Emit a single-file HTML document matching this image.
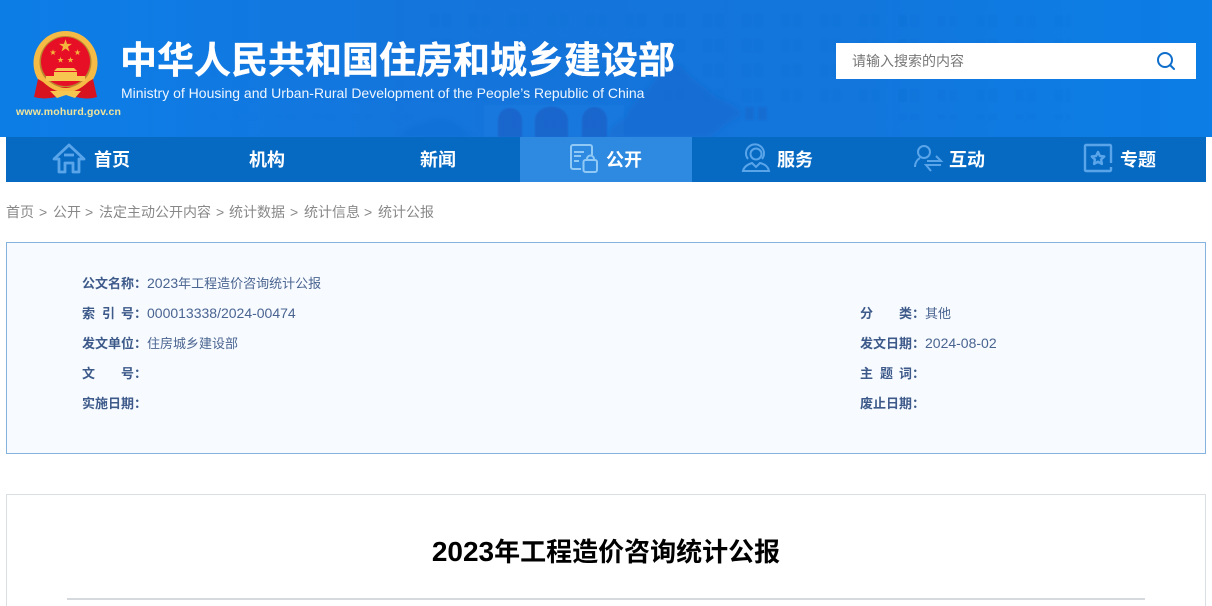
<!DOCTYPE html>
<html lang="zh-CN"><head><meta charset="utf-8"><title>2023年工程造价咨询统计公报</title>
<style>
html,body{margin:0;padding:0;width:1212px;height:606px;overflow:hidden;background:#fff}
body{position:relative;font-family:"Liberation Sans","Noto Sans CJK SC",sans-serif}
.a{position:absolute;white-space:nowrap}
.nav{font-size:18px;font-weight:700;color:#fff;top:148px;line-height:24px}
.l{font-size:13px;font-weight:700;color:#3d5a8a;line-height:20px;white-space:pre}
.v{font-size:13px;color:#4a6491;line-height:20px}
.v span{font-size:14px}
.crumb{font-size:14px;color:#888;line-height:20px;top:202px}
</style></head><body>
<svg class="a" style="left:0;top:0" width="1212" height="137" viewBox="0 0 1212 137">
<defs>
<linearGradient id="bg" x1="0" x2="1" y1="0" y2="0"><stop offset="0" stop-color="#0d7de6"/><stop offset=".45" stop-color="#1278e0"/><stop offset="1" stop-color="#0c7de4"/></linearGradient>
<linearGradient id="fade" x1="0" x2="1" y1="0" y2="0"><stop offset="0" stop-color="#1a6ccf" stop-opacity="0"/><stop offset=".3" stop-color="#1a6ccf" stop-opacity=".3"/><stop offset=".75" stop-color="#1a6ccf" stop-opacity=".3"/><stop offset="1" stop-color="#1a6ccf" stop-opacity="0"/></linearGradient>
<pattern id="win" x="428" y="12" width="39" height="25" patternUnits="userSpaceOnUse"><rect x="2" y="2" width="9" height="13" fill="#1b5fc4"/><rect x="14" y="2" width="9" height="13" fill="#1b5fc4"/></pattern>
<filter id="b1"><feGaussianBlur stdDeviation=".8"/></filter><filter id="b2"><feGaussianBlur stdDeviation="2.500"/></filter>
</defs>
<rect width="1212" height="137" fill="url(#bg)"/>
<rect x="130" y="0" width="950" height="137" fill="url(#fade)"/>
<g filter="url(#b1)">
<rect x="428" y="12" width="480" height="100" fill="url(#win)" opacity=".09"/>
<rect x="880" y="15" width="190" height="105" fill="url(#win)" opacity=".07"/>
<rect x="210" y="50" width="220" height="70" fill="url(#win)" opacity=".04"/>
<rect x="745" y="107" width="9" height="13" fill="#1b5fc4" opacity=".4"/><rect x="758" y="107" width="9" height="13" fill="#1b5fc4" opacity=".4"/>
<rect x="484" y="105" width="140" height="32" fill="#3a8ce6" opacity=".12"/>
<path d="M498 137v-17a12 12 0 0 1 24 0v17z M535 137v-17a16 13 0 0 1 33 0v17z M582 137v-17a12.500 13 0 0 1 25 0v17z" fill="#1c5ec6" opacity=".7"/>
</g>
<g filter="url(#b2)" fill="#1a63c8">
<path d="M608 137c2-10 12-16 18-20 3-12 14-20 22-28 7-12 20-22 28-25 10 4 14 14 22 18 8 6 14 12 20 16 10 4 20 8 24 16-6 6-14 8-20 14-4 4-8 6-12 9z" opacity=".38"/>
<path d="M400 137c6-8 14-12 24-14 10-6 24-6 34 2 6 4 10 8 14 12z" opacity=".2"/>
</g>
</svg>
<!-- emblem -->
<svg class="a" style="left:30px;top:29px" width="72" height="74" viewBox="0 0 72 74">
<defs><path id="st" d="M0-1L.225-.309H.951L.363.118.588.809 0 .382-.588.809-.363.118-.951-.309H-.225z"/></defs>
<circle cx="35.500" cy="34" r="32" fill="#f6bb45"/>
<circle cx="35.500" cy="33" r="26" fill="#b9852f"/>
<circle cx="35.500" cy="32.500" r="24.500" fill="#e60f26"/>
<path d="M8 50L4 68q10 3 22 0l10-4 10 4q12 3 21 0L63 50l-14 8H22z" fill="#d6131f"/>
<path d="M12 46q24 26 47 0l3 3Q36 78 9 49z" fill="#f6bb45"/>
<path d="M16 47h39v5H16zM24 43h23v4H24z" fill="#f6c651"/><path d="M24 42l3-3h17l3 3z" fill="#f6c651"/>
<path d="M20 62h31l-6 7-9-3-9 3z" fill="#f6c651"/>
<g fill="#f4b53c"><use href="#st" transform="translate(35.500 17) scale(6.800)"/><use href="#st" transform="translate(23 23.500) scale(3.300)"/><use href="#st" transform="translate(47.500 23.500) scale(3.300)"/><use href="#st" transform="translate(30.500 31) scale(3.300)"/><use href="#st" transform="translate(40.500 31) scale(3.300)"/></g>
</svg>
<div class="a" style="left:16px;top:105px;font-size:10.500px;font-weight:700;color:#f0e59c;letter-spacing:.18px;line-height:14px">www.mohurd.gov.cn</div>
<div class="a" style="left:120px;top:34px;font-size:37px;font-weight:700;color:#fff;line-height:54px;-webkit-text-stroke:.3px #fff">中华人民共和国住房和城乡建设部</div>
<div class="a" style="left:121px;top:84px;font-size:14px;color:#eef6ff;line-height:18px">Ministry of Housing and Urban-Rural Development of the People’s Republic of China</div>
<div class="a" style="left:836px;top:43px;width:360px;height:36px;background:#fff"></div>
<div class="a" style="left:852px;top:51px;font-size:14px;color:#777;line-height:20px">请输入搜索的内容</div>
<svg class="a" style="left:1154px;top:49px" width="24" height="24" viewBox="0 0 24 24" fill="none" stroke="#0f6ecb" stroke-width="2"><circle cx="11" cy="11" r="7"/><path d="M16 16l4 4" stroke-linecap="round"/></svg>
<!-- nav -->
<div class="a" style="left:6px;top:137px;width:1200px;height:45px;background:#076ac2"></div>
<div class="a" style="left:520px;top:137px;width:172px;height:45px;background:#2d8ae0"></div>
<svg class="a" style="left:50px;top:141px" width="40" height="36" viewBox="0 0 40 36" fill="none" stroke="#5aa5ea" stroke-width="2.800" stroke-linejoin="round"><path d="M4 18L19 4l15 14h-5v13h-6V22h-8v9H9V18z"/><path d="M14 14h10"/></svg>
<div class="a nav" style="left:94px">首页</div>
<div class="a nav" style="left:249px">机构</div>
<div class="a nav" style="left:420px">新闻</div>
<svg class="a" style="left:568px;top:142px" width="32" height="36" viewBox="0 0 32 36" fill="none" stroke="#90c9f5" stroke-width="2"><path d="M13 27H5a2 2 0 0 1-2-2V5a2 2 0 0 1 2-2h17a2 2 0 0 1 2 2v8"/><path d="M6 10h10M6 14h7M6 19h5"/><rect x="15.500" y="18" width="13.500" height="12" rx="2"/><path d="M19 18v-1a3.500 3.500 0 0 1 7 0v1"/></svg>
<div class="a nav" style="left:606px">公开</div>
<svg class="a" style="left:740px;top:142px" width="32" height="32" viewBox="0 0 32 32" fill="none" stroke="#5aa5ea" stroke-width="2"><path d="M8 17a9 9 0 1 1 14 0"/><circle cx="16" cy="12" r="5.500"/><path d="M3 29c1-5 6-7 9-8l4 4 4-4c4 1 8 3 9 8z"/></svg>
<div class="a nav" style="left:777px">服务</div>
<svg class="a" style="left:912px;top:142px" width="32" height="32" viewBox="0 0 32 32" fill="none" stroke="#5aa5ea" stroke-width="2"><circle cx="12" cy="10" r="6"/><path d="M3 25c0-5 3-8 5-9M15 19h14l-5-5M29 23H14l5 6"/></svg>
<div class="a nav" style="left:949px">互动</div>
<svg class="a" style="left:1083px;top:143px" width="30" height="30" viewBox="0 0 30 30" fill="none" stroke="#5aa5ea" stroke-width="2.400"><path d="M28 20V3a1 1 0 0 0-1-1H3a1 1 0 0 0-1 1v24a1 1 0 0 0 1 1h24a1 1 0 0 0 1-1v-3"/><path d="M15 9l1.900 4 4.400.5-3.200 3 .8 4.400-3.900-2.200-3.900 2.200.8-4.400-3.200-3 4.400-.5z" stroke-linejoin="round"/></svg>
<div class="a nav" style="left:1120px">专题</div>
<!-- crumbs -->
<div class="a crumb" style="left:6px">首页</div><div class="a crumb" style="left:39px">&gt;</div>
<div class="a crumb" style="left:53px">公开</div><div class="a crumb" style="left:85px">&gt;</div>
<div class="a crumb" style="left:99px">法定主动公开内容</div><div class="a crumb" style="left:216px">&gt;</div>
<div class="a crumb" style="left:229px">统计数据</div><div class="a crumb" style="left:290px">&gt;</div>
<div class="a crumb" style="left:304px">统计信息</div><div class="a crumb" style="left:364px">&gt;</div>
<div class="a crumb" style="left:378px">统计公报</div>
<!-- info box -->
<div class="a" style="left:6px;top:242px;width:1198px;height:210px;background:#f7fbff;border:1px solid #85b2de"></div>
<div class="a l" style="left:82px;top:274px">公文名称：</div><div class="a v" style="left:147px;top:273px"><span>2023</span>年工程造价咨询统计公报</div>
<div class="a l" style="left:82px;top:304px">索</div><div class="a l" style="left:102px;top:304px">引</div><div class="a l" style="left:121px;top:304px">号：</div><div class="a v" style="left:147px;top:303px"><span>000013338/2024-00474</span></div>
<div class="a l" style="left:82px;top:334px">发文单位：</div><div class="a v" style="left:147px;top:334px">住房城乡建设部</div>
<div class="a l" style="left:82px;top:364px">文</div><div class="a l" style="left:121px;top:364px">号：</div>
<div class="a l" style="left:82px;top:394px">实施日期：</div>
<div class="a l" style="left:860px;top:304px">分</div><div class="a l" style="left:899px;top:304px">类：</div><div class="a v" style="left:925px;top:304px">其他</div>
<div class="a l" style="left:860px;top:334px">发文日期：</div><div class="a v" style="left:925px;top:333px"><span>2024-08-02</span></div>
<div class="a l" style="left:860px;top:364px">主</div><div class="a l" style="left:880px;top:364px">题</div><div class="a l" style="left:899px;top:364px">词：</div>
<div class="a l" style="left:860px;top:394px">废止日期：</div>
<!-- article -->
<div class="a" style="left:6px;top:494px;width:1198px;height:130px;background:#fff;border:1px solid #dadfe4"></div>
<div class="a" style="left:6px;top:532px;width:1200px;text-align:center;font-size:26px;font-weight:700;color:#000;line-height:40px"><span style="font-size:28px">2023</span>年工程造价咨询统计公报</div>
<div class="a" style="left:67px;top:598px;width:1078px;height:2px;background:#d6dade"></div>
</body></html>
